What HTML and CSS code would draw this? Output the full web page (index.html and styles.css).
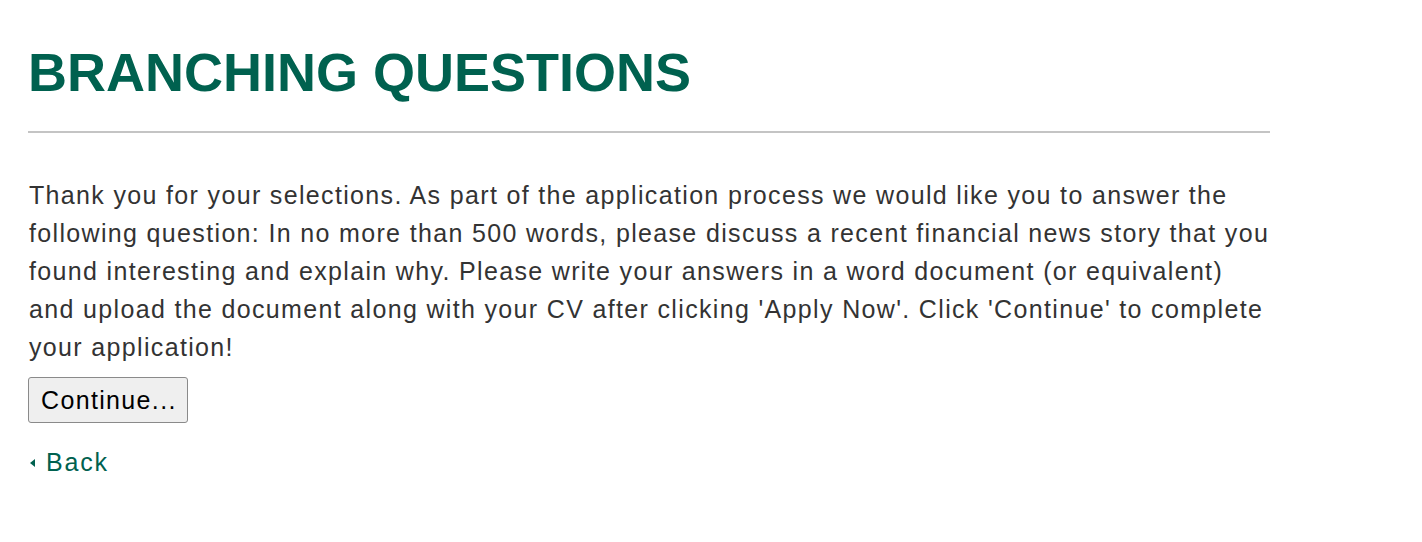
FILE: index.html
```html
<!DOCTYPE html>
<html>
<head>
<meta charset="utf-8">
<link rel="stylesheet" href="styles.css">
</head>
<body>
<div class="page">
  <h1 class="title">BRANCHING QUESTIONS</h1>
  <hr class="rule">
  <p class="intro">Thank you for your selections. As part of the application process we would like you to answer the following question: In no more than 500 words, please discuss a recent financial news story that you found interesting and explain why. Please write your answers in a word document (or equivalent) and upload the document along with your CV after clicking 'Apply Now'. Click 'Continue' to complete your application!</p>
  <button class="btn" type="button">Continue...</button>
  <a class="back" href="#"><span class="caret"></span>Back</a>
</div>
</body>
</html>
```

FILE: styles.css
```css
html, body {
  margin: 0;
  padding: 0;
  background: #fff;
}
.page {
  width: 1242px;
  padding: 0 0 0 28px;
  font-family: "Liberation Sans", Arial, sans-serif;
}
.title {
  margin: 0;
  padding-top: 42px;
  font-size: 54px;
  line-height: 60px;
  font-weight: bold;
  color: #00614f;
}
.rule {
  margin: 29px 0 0;
  border: 0;
  height: 2px;
  background: #c4c4c4;
}
.intro {
  margin: 43px 0 0;
  font-size: 25px;
  letter-spacing: 1.34px;
  line-height: 38px;
  color: #333;
  padding-left: 1px;
}
.btn {
  display: block;
  margin-top: 11px;
  font-family: "Liberation Sans", Arial, sans-serif;
  font-size: 25px;
  letter-spacing: 1.35px;
  color: #000;
  background: #efefef;
  border: 1px solid #8a8a8a;
  border-radius: 3px;
  padding: 7px 10px 7px 12px;
  line-height: 30px;
}
.back {
  display: inline-flex;
  align-items: center;
  margin-top: 22px;
  font-size: 25px;
  letter-spacing: 1.8px;
  line-height: 34px;
  color: #00614f;
  text-decoration: none;
  padding-left: 2px;
}
.caret {
  width: 0;
  height: 0;
  border-top: 4.5px solid transparent;
  border-bottom: 4.5px solid transparent;
  border-right: 5px solid #00614f;
  margin-right: 11px;
  margin-top: 2px;
}
```
